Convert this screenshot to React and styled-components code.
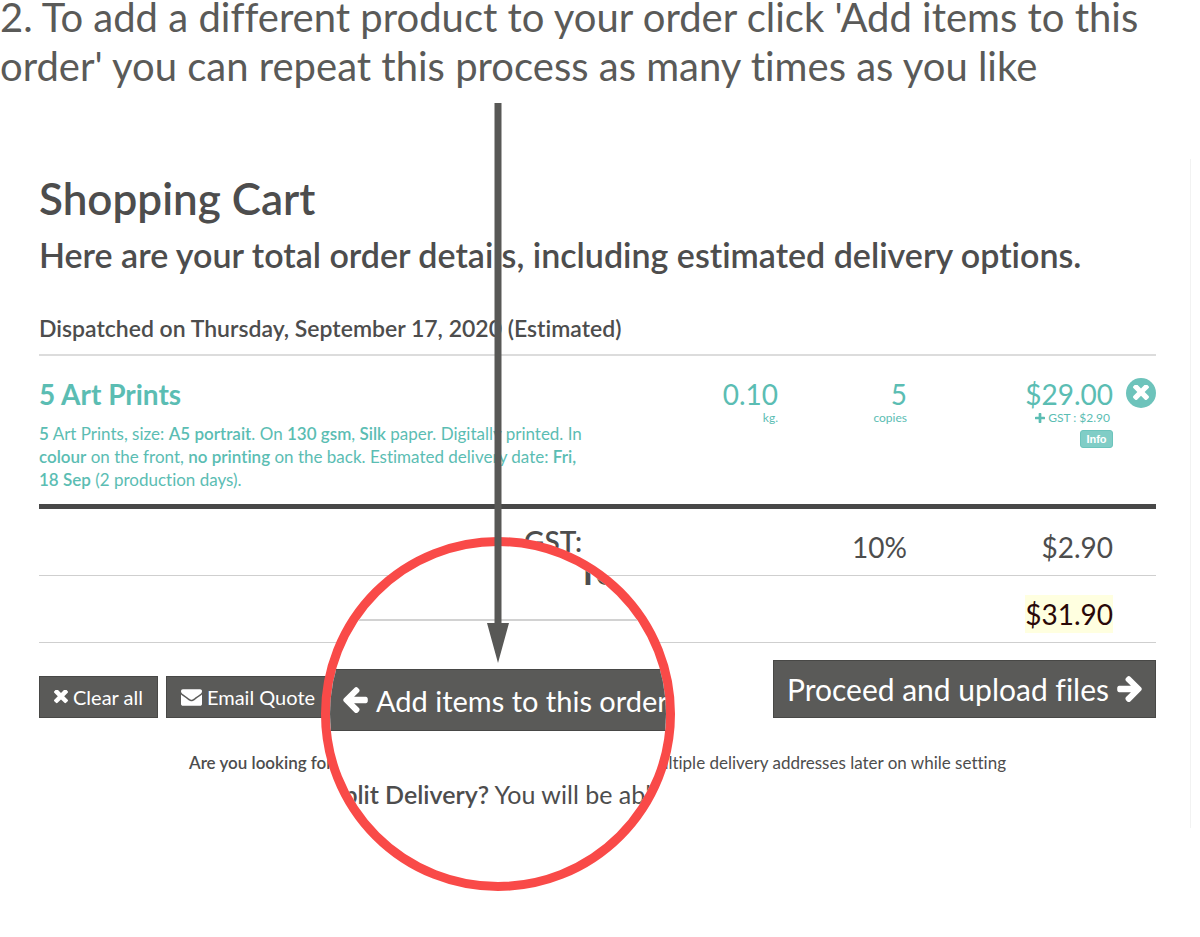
import React from 'react';
import styled, { createGlobalStyle } from 'styled-components';

const GlobalStyle = createGlobalStyle`
  * {
    box-sizing: border-box;
  }

  body {
    background-color: #ffffff;
    color: #4d4d4d;
    font-family: Lato, "Liberation Sans", sans-serif;
    font-variant-ligatures: none;
    margin: 0;
  }

  h1, h2, h3, p {
    margin: 0;
  }

  h1, h2, h3 {
    font-weight: 600;
  }
`;

const Page = styled.main`
  display: flow-root;
  padding-bottom: 109px;
  position: relative;
`;

const Instruction = styled.p`
  color: #5a5a58;
  font-size: 40px;
  line-height: 49px;
  margin-top: -7px;
`;

const Panel = styled.section`
  border-right: 1px solid #f2f2f2;
  margin: 68px 9px 0 0;
  padding: 14px 34px 53px 39px;
`;

const Title = styled.h1`
  font-size: 44px;
  line-height: 50px;
`;

const Subtitle = styled.h2`
  font-size: 34px;
  line-height: 40px;
  margin-top: 12px;
`;

const Dispatch = styled.h3`
  border-bottom: 2px solid #dcdcdc;
  font-size: 23px;
  line-height: 30px;
  margin-top: 38px;
  padding-bottom: 11px;
`;

const Table = styled.table`
  border-collapse: separate;
  border-spacing: 0;
  table-layout: fixed;
  width: 100%;
`;

const Col = styled.col`
  width: ${({ $width }) => $width};
`;

const ItemCell = styled.td`
  border-bottom: 5px solid #484848;
  color: #5bbdb3;
  height: 153px;
  padding: 22px 0 12px;
  text-align: ${({ $align }) => $align || 'right'};
  vertical-align: top;
`;

const ItemTitle = styled.h3`
  font-size: 28px;
  font-weight: 700;
  line-height: 32px;
  margin-bottom: 12px;
`;

const ItemText = styled.p`
  font-size: 17px;
  line-height: 23px;
  white-space: nowrap;

  b {
    font-weight: 600;
  }
`;

const Amount = styled.div`
  font-size: 28px;
  line-height: 32px;
`;

const Unit = styled.div`
  align-items: center;
  display: flex;
  font-size: 12px;
  gap: 3px;
  justify-content: flex-end;
  line-height: 16px;
  padding-right: ${({ $inset }) => ($inset ? '3px' : '0')};
`;

const InfoButton = styled.button`
  background-color: #80cdc6;
  border: 1px solid #6cc4bc;
  border-radius: 3px;
  color: #ffffff;
  font-family: "Liberation Sans", sans-serif;
  font-size: 11px;
  font-weight: 700;
  height: 18px;
  line-height: 16px;
  margin-top: 4px;
  padding: 0;
  width: 33px;
`;

const RemoveButton = styled.button`
  align-items: center;
  background-color: #6dc3bb;
  border: 0;
  border-radius: 50%;
  color: #ffffff;
  display: inline-flex;
  height: 30px;
  justify-content: center;
  padding: 0;
  width: 30px;
`;

const SumCell = styled.td`
  border-bottom: 1px solid #cfcfcf;
  font-size: 28px;
  height: 67px;
  line-height: 32px;
  padding: 22px 0 12px;
  text-align: right;
  vertical-align: top;
`;

const SumLabel = styled(SumCell).attrs({ as: 'th', scope: 'row' })`
  font-weight: 600;
  padding: 16px 0 18px;
`;

const Total = styled.mark`
  background-color: #ffffe0;
  color: #2a0808;
  padding: 2px 0;
`;

const Actions = styled.div`
  align-items: flex-end;
  display: flex;
  gap: 8px;
  margin-top: 17px;
`;

const Button = styled.button`
  align-items: center;
  background-color: #5a5a58;
  border: 1px solid #484846;
  color: #ffffff;
  display: flex;
  flex-shrink: 0;
  font-family: inherit;
  font-size: ${({ $large }) => ($large ? '30px' : '20px')};
  font-variant-ligatures: none;
  gap: ${({ $large }) => ($large ? '8px' : '5px')};
  height: ${({ $large }) => ($large ? '58px' : '42px')};
  justify-content: center;
  padding: 0 ${({ $large }) => ($large ? '13px' : '14px')};
  white-space: nowrap;

  svg {
    flex-shrink: 0;
  }
`;

const Proceed = styled(Button)`
  margin-left: auto;
`;

const Note = styled.p`
  font-size: 17px;
  line-height: 24px;
  margin-top: 33px;
  text-align: center;

  b {
    font-weight: 600;
  }
`;

const Lens = styled.div`
  background-color: #ffffff;
  border: 9px solid #f94a48;
  border-radius: 50%;
  height: 354px;
  left: 321px;
  overflow: hidden;
  position: absolute;
  top: 537px;
  width: 354px;
`;

const LensTotal = styled.div`
  border-bottom: 2px solid #d2d2d2;
  font-size: 40px;
  font-weight: 600;
  height: 75px;
  line-height: 48px;
  padding-left: 246px;
`;

const LensButton = styled(Button)`
  border-width: 1px 0;
  font-size: 29px;
  height: 62px;
  justify-content: flex-start;
  margin-top: 48px;
  width: 100%;
`;

const LensNote = styled.p`
  font-size: 25px;
  line-height: 32px;
  margin-top: 47px;
  white-space: nowrap;

  b {
    font-weight: 600;
  }
`;

const Pointer = styled.svg`
  left: 487px;
  position: absolute;
  top: 103px;
`;

const Icon = ({ box, d, width, height }) => (
  <svg width={width} height={height} viewBox={box} fill="currentColor" aria-hidden="true">
    <path d={d} />
  </svg>
);

const CrossIcon = ({ size }) => (
  <Icon
    width={size}
    height={size}
    box="110 366 1188 1188"
    d="M1298 1254q0 40-28 68l-136 136q-28 28-68 28t-68-28l-294-294-294 294q-28 28-68 28t-68-28l-136-136q-28-28-28-68t28-68l294-294-294-294q-28-28-28-68t28-68l136-136q28-28 68-28t68 28l294 294 294-294q28-28 68-28t68 28l136 136q28 28 28 68t-28 68l-294 294 294 294q28 28 28 68z"
  />
);

const MailIcon = () => (
  <Icon
    width={21}
    height={17}
    box="0 256 1792 1408"
    d="M1792 710v794q0 66-47 113t-113 47h-1472q-66 0-113-47t-47-113v-794q44 49 101 87 362 246 497 345 57 42 92.5 65.5t94.5 48 110 24.5h2q51 0 110-24.5t94.5-48 92.5-65.5q170-123 498-345 57-39 100-87zm0-294q0 79-49 151t-122 123q-376 261-468 325-10 7-42.5 31t-54 38-52 31.5-57.5 27-50 9h-2q-23 0-50-9t-57.5-27-52-31.5-54-38-42.5-31q-91-64-262-182.5t-205-142.5q-62-42-117-115.5t-55-136.5q0-78 41.5-130t118.5-52h1472q65 0 112.5 47t47.5 113z"
  />
);

const PlusIcon = () => (
  <Icon
    width={10}
    height={10}
    box="0 0 11 11"
    d="M4.8 0h1.4q.8 0 .8.8V4h3.2q.8 0 .8.8v1.4q0 .8-.8.8H7v3.2q0 .8-.8.8H4.8q-.8 0-.8-.8V7H.8Q0 7 0 6.2V4.8Q0 4 .8 4H4V.8Q4 0 4.8 0z"
  />
);

const arrow = 'M1472 960q0 54-37 91l-651 651q-39 37-91 37-51 0-90-37l-75-75q-38-38-38-91t38-91l293-293H117q-52 0-84.500-37.500T0 1024V896q0-53 32.500-90.500T117 768h704L528 474q-38-36-38-90t38-90l75-75q38-38 90-38 53 0 91 38l651 651q37 35 37 90z';

const ArrowIcon = ({ left }) => (
  <svg width="25" height="26" viewBox="0 181 1472 1558" fill="currentColor" aria-hidden="true">
    <path d={arrow} transform={left ? 'translate(1472 0) scale(-1 1)' : undefined} />
  </svg>
);

const Cart = () => (
  <Table>
    <colgroup>
      <Col />
      <Col $width="196px" />
      <Col $width="129px" />
      <Col $width="206px" />
      <Col $width="43px" />
    </colgroup>
    <tbody>
      <tr>
        <ItemCell $align="left">
          <ItemTitle>5 Art Prints</ItemTitle>
          <ItemText>
            <b>5</b> Art Prints, size: <b>A5 portrait</b>. On <b>130 gsm</b>, <b>Silk</b> paper. Digitally printed. In
            <br />
            <b>colour</b> on the front, <b>no printing</b> on the back. Estimated delivery date: <b>Fri,</b>
            <br />
            <b>18 Sep</b> (2 production days).
          </ItemText>
        </ItemCell>
        <ItemCell>
          <Amount>0.10</Amount>
          <Unit>kg.</Unit>
        </ItemCell>
        <ItemCell>
          <Amount>5</Amount>
          <Unit>copies</Unit>
        </ItemCell>
        <ItemCell>
          <Amount>$29.00</Amount>
          <Unit $inset><PlusIcon /> GST : $2.90</Unit>
          <InfoButton type="button">Info</InfoButton>
        </ItemCell>
        <ItemCell>
          <RemoveButton type="button" aria-label="Remove item">
            <CrossIcon size={16} />
          </RemoveButton>
        </ItemCell>
      </tr>
      <tr>
        <SumLabel>GST:</SumLabel>
        <SumCell />
        <SumCell>10%</SumCell>
        <SumCell>$2.90</SumCell>
        <SumCell />
      </tr>
      <tr>
        <SumCell colSpan="3" />
        <SumCell><Total>$31.90</Total></SumCell>
        <SumCell />
      </tr>
    </tbody>
  </Table>
);

const App = () => (
  <Page>
    <GlobalStyle />

    <Instruction>
      2. To add a different product to your order click 'Add items to this
      <br />
      order' you can repeat this process as many times as you like
    </Instruction>

    <Panel>
      <Title>Shopping Cart</Title>
      <Subtitle>Here are your total order details, including estimated delivery options.</Subtitle>
      <Dispatch>Dispatched on Thursday, September 17, 2020 (Estimated)</Dispatch>

      <Cart />

      <Actions>
        <Button type="button"><CrossIcon size={14} />Clear all</Button>
        <Button type="button"><MailIcon />Email Quote</Button>
        <Proceed type="button" $large>Proceed and upload files<ArrowIcon /></Proceed>
      </Actions>

      <Note>
        <b>Are you looking for Split Delivery?</b> You will be able to specify multiple delivery addresses later on while setting
      </Note>
    </Panel>

    <Lens>
      <LensTotal>To</LensTotal>
      <LensButton type="button" $large><ArrowIcon left />Add items to this order</LensButton>
      <LensNote><b>Split Delivery?</b> You will be able</LensNote>
    </Lens>

    <Pointer width="22" height="560" viewBox="0 0 22 560" fill="#585856" aria-hidden="true">
      <path d="M7.500 0h7v520H22L11 560 0 520h7.500z" />
    </Pointer>
  </Page>
);

export default App;
